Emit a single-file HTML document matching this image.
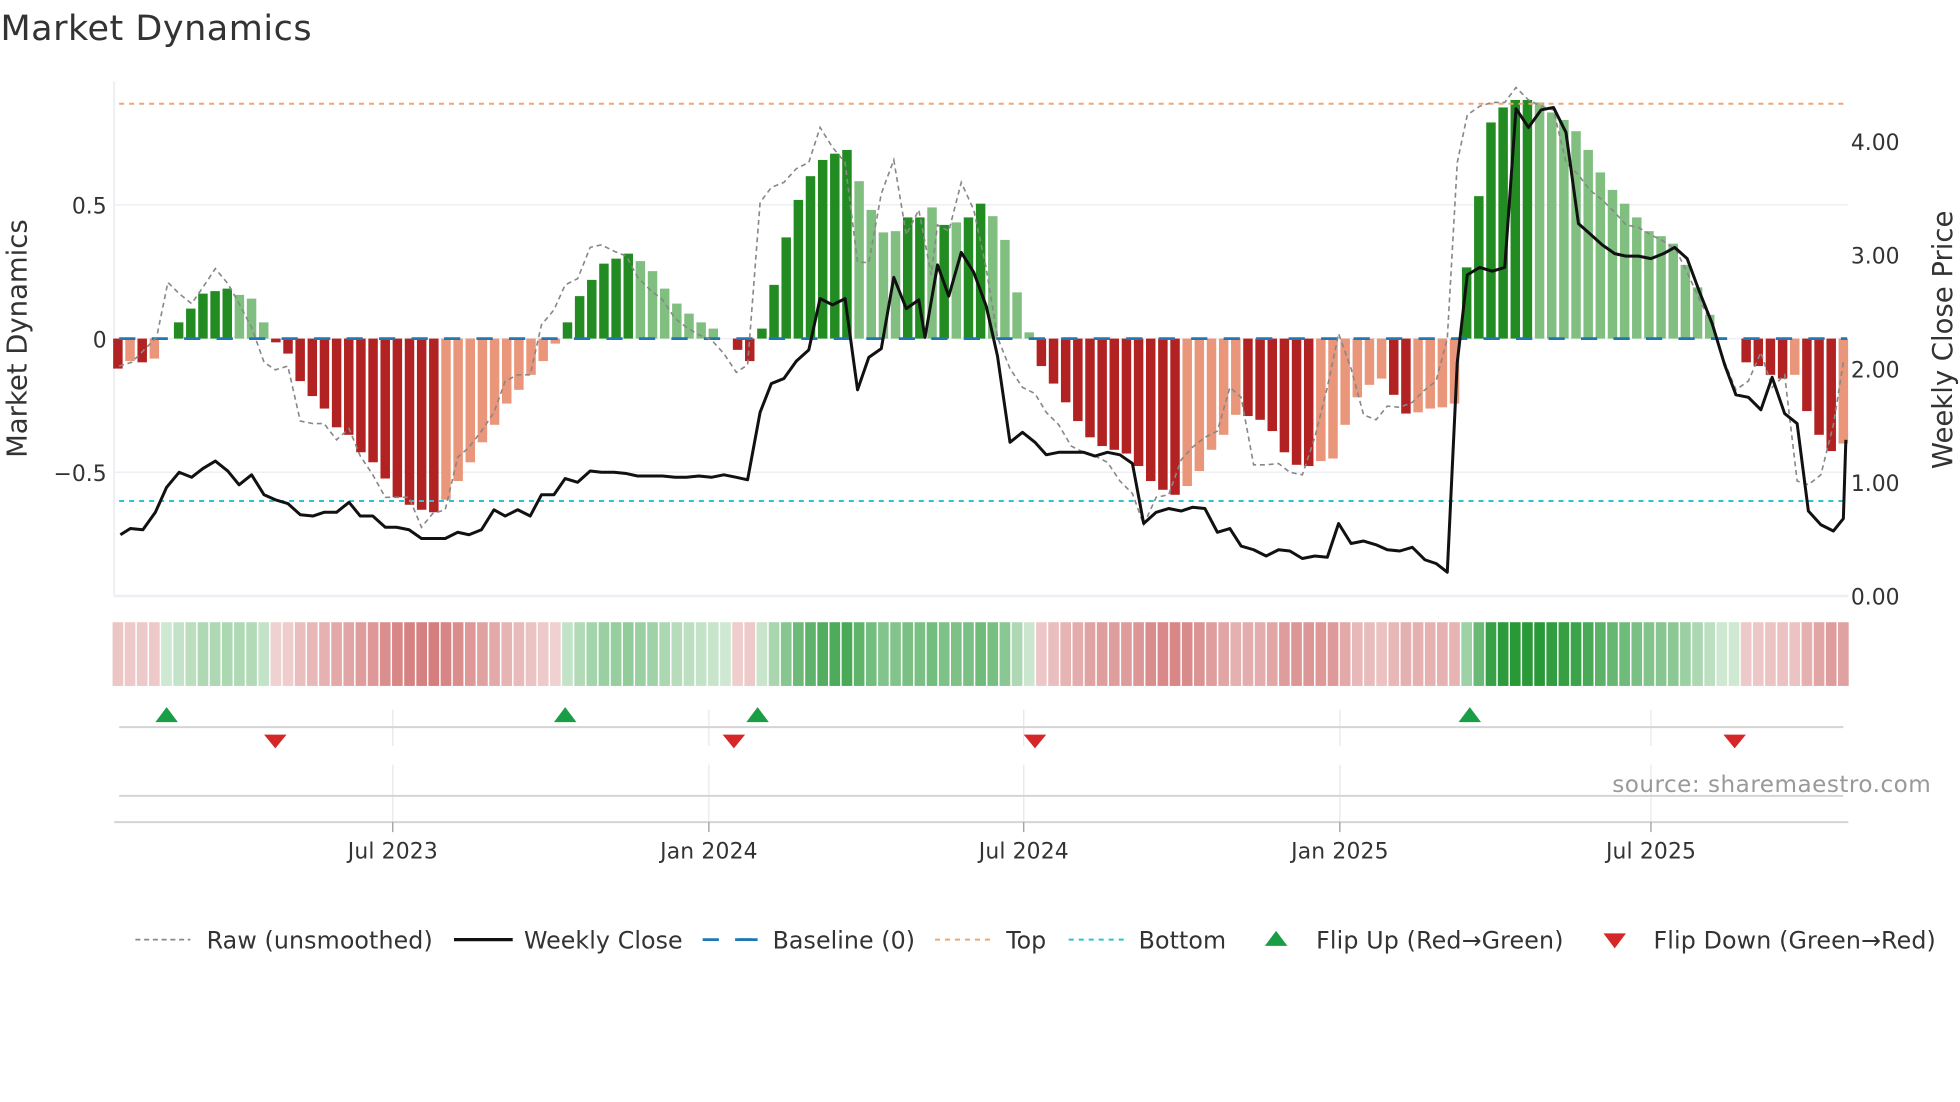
<!DOCTYPE html>
<html><head><meta charset="utf-8"><style>
html,body{margin:0;padding:0;background:#fff;width:1960px;height:1102px;overflow:hidden}
svg{display:block;font-family:"DejaVu Sans","Liberation Sans",sans-serif}
</style></head><body>
<svg id="s" width="1960" height="1102" viewBox="0 0 1568 882" xmlns="http://www.w3.org/2000/svg">
<rect width="1568" height="882" fill="#fff"/>
<text x="0" y="32" font-size="28" fill="#333" textLength="249">Market Dynamics</text>
<line x1="91" y1="65" x2="91" y2="477" stroke="#eceef4" stroke-width="1.5"/>
<line x1="91" y1="477" x2="1479" y2="477" stroke="#eceef4" stroke-width="2"/>
<line x1="91" y1="164" x2="1479" y2="164" stroke="#eeeff3" stroke-width="1.2"/>
<line x1="91" y1="378" x2="1479" y2="378" stroke="#eeeff3" stroke-width="1.2"/>
<line x1="91" y1="271" x2="1479" y2="271" stroke="#eeeff3" stroke-width="1.2"/>
<g id="bars"></g>
<line x1="95" y1="271" x2="1478" y2="271" stroke="#1f77b4" stroke-width="2.2" stroke-dasharray="13,13"/>
<line x1="95" y1="83" x2="1478" y2="83" stroke="#f0a672" stroke-width="1.6" stroke-dasharray="4,4"/>
<line x1="95" y1="401" x2="1478" y2="401" stroke="#2bc3cf" stroke-width="1.6" stroke-dasharray="4,4"/>
<polyline id="raw" fill="none" stroke="#888" stroke-width="1.3" stroke-dasharray="4,3"/>
<polyline id="close" fill="none" stroke="#111" stroke-width="2.4" stroke-linejoin="round"/>
<g font-size="17.5" fill="#333">
<text x="85" y="171" text-anchor="end">0.5</text>
<text x="85" y="278" text-anchor="end">0</text>
<text x="85" y="385" text-anchor="end">−0.5</text>
<text x="1481" y="120">4.00</text>
<text x="1481" y="211">3.00</text>
<text x="1481" y="302">2.00</text>
<text x="1481" y="393">1.00</text>
<text x="1481" y="484">0.00</text>
</g>
<text transform="translate(21,271) rotate(-90)" text-anchor="middle" font-size="22" fill="#333">Market Dynamics</text>
<text transform="translate(1562,272) rotate(-90)" text-anchor="middle" font-size="22" fill="#333">Weekly Close Price</text>
<g id="strip"></g>
<g stroke="#e8e8ec" stroke-width="1">
<line x1="314" y1="568" x2="314" y2="597"/><line x1="314" y1="612" x2="314" y2="658"/>
<line x1="567" y1="568" x2="567" y2="597"/><line x1="567" y1="612" x2="567" y2="658"/>
<line x1="819" y1="568" x2="819" y2="597"/><line x1="819" y1="612" x2="819" y2="658"/>
<line x1="1072" y1="568" x2="1072" y2="597"/><line x1="1072" y1="612" x2="1072" y2="658"/>
<line x1="1321" y1="568" x2="1321" y2="597"/><line x1="1321" y1="612" x2="1321" y2="658"/>
</g>
<line x1="95" y1="582" x2="1475" y2="582" stroke="#d4d4d4" stroke-width="1.6"/>
<line x1="95" y1="637" x2="1475" y2="637" stroke="#d4d4d4" stroke-width="1.6"/>
<line x1="91" y1="658" x2="1479" y2="658" stroke="#d4d4d4" stroke-width="1.6"/>
<g id="flips"></g>
<g stroke="#999" stroke-width="1">
<line x1="314" y1="658" x2="314" y2="666"/><line x1="567" y1="658" x2="567" y2="666"/><line x1="819" y1="658" x2="819" y2="666"/><line x1="1072" y1="658" x2="1072" y2="666"/><line x1="1321" y1="658" x2="1321" y2="666"/>
</g>
<g font-size="17.5" fill="#333" text-anchor="middle">
<text x="314" y="687" textLength="72">Jul 2023</text><text x="567" y="687" textLength="78">Jan 2024</text><text x="819" y="687" textLength="72">Jul 2024</text><text x="1072" y="687" textLength="78">Jan 2025</text><text x="1321" y="687" textLength="72">Jul 2025</text>
</g>
<text x="1290" y="634" font-size="18.5" fill="#999" textLength="255">source: sharemaestro.com</text>
<g font-size="19" fill="#333">
<line x1="108" y1="752" x2="152" y2="752" stroke="#888" stroke-width="1.4" stroke-dasharray="4,3"/>
<text x="165" y="759" textLength="181">Raw (unsmoothed)</text>
<line x1="363" y1="752" x2="410" y2="752" stroke="#111" stroke-width="2.6"/>
<text x="419" y="759" textLength="127">Weekly Close</text>
<line x1="562" y1="752" x2="606" y2="752" stroke="#1f77b4" stroke-width="2.2" stroke-dasharray="13,13"/>
<line x1="591" y1="752" x2="606" y2="752" stroke="#1f77b4" stroke-width="2.2"/>
<text x="618" y="759" textLength="114">Baseline (0)</text>
<line x1="748" y1="752" x2="792" y2="752" stroke="#f0a672" stroke-width="1.6" stroke-dasharray="4,4"/>
<text x="805" y="759" textLength="32">Top</text>
<line x1="855" y1="752" x2="899" y2="752" stroke="#2bc3cf" stroke-width="1.6" stroke-dasharray="4,4"/>
<text x="911" y="759" textLength="70">Bottom</text>
<polygon points="1012,757 1030,757 1021,745" fill="#1a9e45"/>
<text x="1053" y="759" textLength="198">Flip Up (Red→Green)</text>
<polygon points="1283,747 1301,747 1292,759" fill="#d62728"/>
<text x="1323" y="759" textLength="226">Flip Down (Green→Red)</text>
</g>
</svg>
<script>
var NS="http://www.w3.org/2000/svg";
function el(p,t,a){var e=document.createElementNS(NS,t);for(var k in a)e.setAttribute(k,a[k]);p.appendChild(e);return e;}
var B=[[295,'D'],[289,'L'],[290,'D'],[287,'L'],[271,'L'],[258,'D'],[247,'D'],[235,'D'],[233,'D'],[231,'D'],[236,'L'],[239,'L'],[258,'L'],[274,'D'],[283,'D'],[305,'D'],[317,'D'],[327,'D'],[342,'D'],[348,'D'],[362,'D'],[370,'D'],[383,'D'],[398,'D'],[404,'D'],[408,'D'],[410,'D'],[400,'L'],[385,'L'],[370,'L'],[354,'L'],[340,'L'],[323,'L'],[312,'L'],[300,'L'],[289,'L'],[275,'L'],
[258,'D'],[237,'D'],[224,'D'],[211,'D'],[207,'D'],[203,'D'],[209,'L'],[217,'L'],[231,'L'],[243,'L'],[251,'L'],[258,'L'],[263,'L'],[271,'L'],[280,'D'],[289,'D'],
[263,'D'],[228,'D'],[190,'D'],[160,'D'],[141,'D'],[128,'D'],[123,'D'],[120,'D'],[145,'L'],[168,'L'],[186,'L'],[185,'L'],[174,'D'],[174,'D'],[166,'L'],[180,'D'],[178,'L'],[174,'D'],[163,'D'],[173,'L'],[192,'L'],[234,'L'],[266,'L'],
[293,'D'],[307,'D'],[322,'D'],[337,'D'],[350,'D'],[357,'D'],[360,'D'],[363,'D'],[373,'D'],[385,'D'],[392,'D'],[396,'D'],[389,'L'],[377,'L'],[360,'L'],[348,'L'],[332,'L'],[333,'D'],[336,'D'],[345,'D'],[362,'D'],[372,'D'],[373,'D'],[369,'L'],[367,'L'],[340,'L'],[318,'L'],[308,'L'],[303,'L'],[316,'D'],[331,'D'],[330,'L'],[327,'L'],[326,'L'],[323,'L'],
[214,'D'],[157,'D'],[98,'D'],[86,'D'],[80,'D'],[80,'D'],[82,'L'],[90,'L'],[96,'L'],[105,'L'],[120,'L'],[138,'L'],[152,'L'],[163,'L'],[174,'L'],[185,'L'],[189,'L'],[195,'L'],[212,'L'],[230,'L'],[252,'L'],[270,'L'],
[271,'L'],[290,'D'],[293,'D'],[300,'D'],[303,'D'],[300,'L'],[329,'D'],[348,'D'],[361,'D'],[355,'L']];
var n=B.length,x0=94,x1=1475,dx=(x1-x0)/(n-1),w=dx*0.78;
var gb=document.getElementById('bars'),gs=document.getElementById('strip');
for(var i=0;i<n;i++){var y=B[i][0],k=B[i][1],cx=x0+i*dx,v=271-y;
 var up=v>0, c=up?(k=='D'?'#228b22':'#80bf80'):(k=='D'?'#b22222':'#e9967a');
 if(Math.abs(v)>=1) el(gb,'rect',{x:cx-w/2,y:Math.min(y,271),width:w,height:Math.abs(v),fill:c});
 var a=Math.abs(v);var col;
 if(v>=0){var t=0.22+0.75*Math.min(a/190,1);col='rgba(34,150,50,'+t.toFixed(2)+')';}
 else{var t=0.2+0.4*Math.min(a/140,1);col='rgba(185,40,40,'+t.toFixed(2)+')';}
 el(gs,'rect',{x:cx-dx/2+0.6,y:498,width:dx-1.2,height:51,fill:col});
}
var C="96,428 104,423 114,424 124,410 133,390 143,378 153,382 162,375 172,369 182,377 191,388 201,380 211,396 220,400 230,403 240,412 250,413 259,410 269,410 279,402 288,413 298,413 308,422 317,422 327,424 337,431 346,431 356,431 366,426 375,428 385,424 395,408 404,413 414,408 424,413 433,396 443,396 452,383 462,386 472,377 481,378 491,378 501,379 510,381 520,381 530,381 540,382 549,382 559,381 569,382 579,380 589,382 598,384 608,330 617,307 627,303 637,289 647,280 656,239 666,244 676,239 686,312 695,286 705,279 715,222 725,247 735,240 740,270 750,212 759,237 769,202 779,218 789,245 798,285 808,354 818,346 828,354 837,364 847,362 857,362 867,362 876,365 886,362 896,364 906,371 915,419 925,410 935,407 945,409 954,406 964,407 974,426 984,423 993,437 1003,440 1013,445 1023,440 1032,441 1042,447 1052,445 1062,446 1071,419 1081,435 1091,433 1101,436 1110,440 1120,441 1130,438 1140,448 1149,451 1158,458 1166,290 1174,220 1184,214 1194,217 1204,214 1213,87 1223,102 1233,88 1243,86 1253,106 1263,179 1272,187 1282,196 1292,203 1301,205 1311,205 1321,207 1331,203 1340,198 1350,207 1360,234 1370,259 1380,292 1389,316 1399,318 1409,328 1418,302 1428,331 1438,339 1447,409 1457,420 1467,425 1475,415 1477,352";
document.getElementById('close').setAttribute('points',C);
var R="95,293 105,290 125,270 134,226 143,235 153,243 162,230 172,215 182,227 191,243 201,262 211,290 220,296 230,293 240,337 250,339 259,339 269,352 279,343 288,365 298,380 308,398 317,398 327,398 337,422 346,411 356,408 366,366 375,358 385,345 395,330 404,305 414,300 424,300 433,260 443,248 452,228 462,223 472,198 481,196 491,201 501,205 510,222 520,232 530,240 540,255 549,262 559,268 569,272 579,283 589,298 598,292 608,162 617,150 627,146 637,135 647,130 656,102 666,118 676,130 686,210 695,210 705,155 715,128 725,188 735,168 745,220 750,180 759,185 769,146 779,168 789,215 798,270 808,295 818,310 828,315 837,330 847,340 857,357 867,362 876,365 886,370 896,385 906,395 915,420 925,398 935,396 945,368 954,358 964,350 974,345 984,310 993,318 1003,372 1013,372 1023,371 1032,378 1042,380 1052,350 1062,310 1071,267 1081,295 1091,332 1101,336 1110,325 1120,326 1130,322 1140,312 1149,305 1158,271 1166,130 1174,92 1184,85 1194,82 1204,82 1213,70 1223,80 1233,85 1243,88 1253,130 1263,140 1272,152 1282,160 1292,170 1301,180 1311,182 1321,188 1331,193 1341,200 1350,218 1360,240 1370,260 1380,290 1389,312 1399,305 1409,282 1418,310 1428,300 1438,385 1447,388 1457,380 1467,340 1475,290";
document.getElementById('raw').setAttribute('points',R);
var gf=document.getElementById('flips');
[133,452,606,1176].forEach(function(x){el(gf,'polygon',{points:(x-9)+',578 '+(x+9)+',578 '+x+',566',fill:'#1a9e45'});});
[220,587,828,1388].forEach(function(x){el(gf,'polygon',{points:(x-9)+',588 '+(x+9)+',588 '+x+',599',fill:'#d62728'});});
</script>
</body></html>
